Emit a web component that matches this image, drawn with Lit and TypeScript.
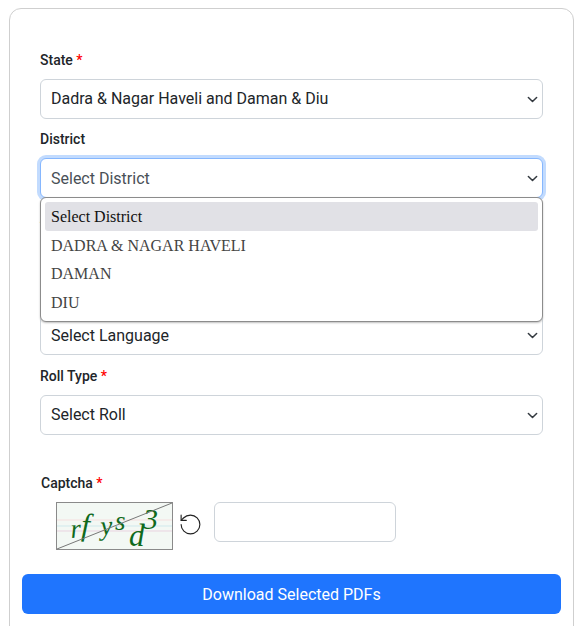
import { LitElement, html, css, svg } from "lit";
import { customElement } from "lit/decorators.js";

const chevron = html`<svg class="chev" viewBox="0 0 16 16"><path fill="none" stroke="#343a40" stroke-linecap="round" stroke-linejoin="round" stroke-width="2.2" d="m2 5 6 6 6-6"/></svg>`;

const glyphs: [string, number, number, number, number][] = [
  ["r", 15, 36, 27, -4],
  ["f", 25, 33, 31, 2],
  ["y", 45, 33, 27, -4],
  ["s", 59, 28, 27, 0],
  ["d", 73, 44, 31, 0],
  ["3", 87, 27, 30, 0],
];

@customElement("app-root")
export class AppRoot extends LitElement {
  static styles = css`
    :host { display: block; height: 626px; overflow: hidden; background: #fff; font-family: Roboto, "Liberation Sans", sans-serif; color: #212529; }
    .card { margin: 8px 10px 0 9px; border: 1px solid #cfcfcf; border-radius: 12px; padding: 41px 12px 24px; background: #fff; }
    .form { padding: 0 18px; position: relative; }
    .field { margin-bottom: 10px; }
    .field.before-language { margin-bottom: 9px; }
    .field.language { margin-bottom: 11px; }
    .label { display: block; font-size: 14px; font-weight: 500; line-height: 20px; margin-bottom: 9px; color: #212529; }
    .req { color: #f00; }
    .select { position: relative; display: flex; align-items: center; justify-content: space-between; height: 40px; box-sizing: border-box; border: 1px solid #ced4da; border-radius: 6px; padding: 0 4px 0 10px; font-size: 16px; background: #fff; }
    .select span { margin-bottom: 2px; }
    .select.focus span, .language .select span { margin-bottom: 0; }
    .select.focus { border-color: #86b7fe; box-shadow: 0 0 0 3px #c2dbfe; color: #495057; }
    .chev { width: 11px; height: 11px; flex: none; }
    .menu { position: absolute; left: 18px; right: 18px; top: 147px; height: 125px; box-sizing: border-box; background: #fff; border: 1px solid #8c8c8c; border-radius: 6px; padding: 4px; font-family: "Liberation Serif", serif; font-size: 16px; color: #444; box-shadow: 0 1px 2px rgba(0,0,0,.25); z-index: 2; }
    .opt { height: 29px; line-height: 29px; padding-left: 6px; }
    .opt.short { height: 28px; line-height: 28px; }
    .opt.sel { background: #e1e1e6; border-radius: 3px; color: #111; }
    .captcha { padding-top: 28px; }
    .captcha .label { margin: 0 0 9px 1px; }
    .row { display: flex; align-items: flex-start; padding-left: 16px; }
    .img { width: 117px; height: 48px; display: block; flex: none; box-sizing: border-box; }
    .refresh { width: 25px; height: 25px; margin: 10px 11px 0 5px; flex: none; display: block; }
    .input { width: 182px; height: 40px; box-sizing: border-box; border: 1px solid #ced4da; border-radius: 6px; background: #fff; }
    .btn { display: block; width: 100%; height: 40px; margin-top: 24px; border: 0; border-radius: 6px; background: #1f75fe; color: #fff; font: 400 16px Roboto, sans-serif; }
  `;

  field(name: string, value: string, cls = "") {
    return html`<div class="field ${cls}">
      <div class="label">${name} <span class="req">*</span></div>
      <div class="select"><span>${value}</span>${chevron}</div>
    </div>`;
  }

  render() {
    return html`<div class="card">
      <div class="form">
        ${this.field("State", "Dadra & Nagar Haveli and Daman & Diu")}
        <div class="field">
          <div class="label">District</div>
          <div class="select focus"><span>Select District</span>${chevron}</div>
        </div>
        ${this.field("Assembly", "Select Assembly", "before-language")}
        ${this.field("Language", "Select Language", "language")}
        ${this.field("Roll Type", "Select Roll")}
        <div class="menu">
          <div class="opt sel">Select District</div>
          <div class="opt">DADRA &amp; NAGAR HAVELI</div>
          <div class="opt short">DAMAN</div>
          <div class="opt">DIU</div>
        </div>
        <div class="captcha">
          <div class="label">Captcha <span class="req">*</span></div>
          <div class="row">
            <svg class="img" viewBox="0 0 117 48">
              <rect x=".5" y=".5" width="116" height="47" fill="#f3f8f4" stroke="#8a8a8a"/>
              <path d="M1 18h115" stroke="#f5dede"/><path d="M1 24h115" stroke="#cfe9ec"/><path d="M1 29h115" stroke="#e9d3e0"/>
              ${glyphs.map(([c, x, y, s, r]) => svg`<text x=${x} y=${y} font-size=${s} transform=${`rotate(${r} ${x} ${y})`} font-family="Liberation Serif, serif" font-style="italic" fill="#0f6a1c">${c}</text>`)}
              <path d="M1 47 116 1" stroke="#777" fill="none"/>
            </svg>
            <svg class="refresh" viewBox="0 0 24 24" fill="none" stroke="#222" stroke-width="1.1" stroke-linecap="round" stroke-linejoin="round"><path d="M3 12a9 9 0 1 0 9-9 9.75 9.75 0 0 0-6.74 2.74L3 8"/><path d="M3 3v5h5"/></svg>
            <div class="input"></div>
          </div>
        </div>
      </div>
      <button class="btn">Download Selected PDFs</button>
    </div>`;
  }
}
